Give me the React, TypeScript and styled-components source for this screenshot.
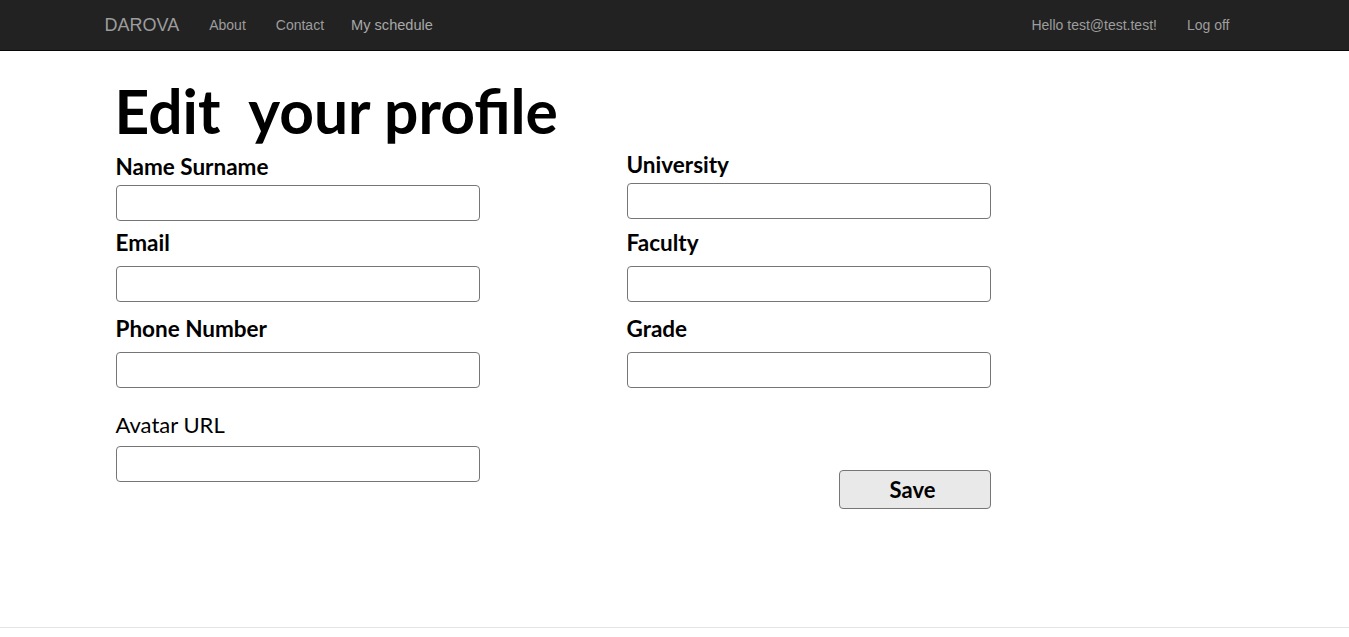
import { FC } from 'react'
import styled, { createGlobalStyle } from 'styled-components'

const GlobalStyle = createGlobalStyle`
    * {
        box-sizing: border-box;
    }
    body {
        margin: 0;
        background: #fff;
        font-family: "Liberation Sans", Arial, sans-serif;
    }
`

const NavBar = styled.nav`
    height: 51px;
    background-color: #222;
    border-bottom: 1px solid #080808;
`

const NavContainer = styled.div`
    width: 1170px;
    margin: 0 auto;
    padding: 0 15px;
    height: 50px;
    display: flex;
    align-items: center;
    justify-content: space-between;
`

const NavGroup = styled.div`
    display: flex;
    align-items: center;
`

const Brand = styled.a`
    font-size: 18px;
    color: #9d9d9d;
    padding: 0 15px 0 0;
    line-height: 50px;
    text-decoration: none;
`

const NavLink = styled.a<{ $bright?: boolean }>`
    font-size: ${p => (p.$bright ? '14.6px' : '14px')};
    color: ${p => (p.$bright ? '#a8a8a8' : '#9d9d9d')};
    padding: 0 15px 0 ${p => (p.$bright ? '12px' : '15px')};
    line-height: 50px;
    text-decoration: none;
`

const Main = styled.main`
    min-height: 576px;
    width: 1170px;
    margin: 0 auto;
    padding: 27px 0 0 26px;
`

const Title = styled.h1`
    margin: 0 0 10px -1px;
    font-family: Lato, "Noto Sans", sans-serif;
    font-weight: 700;
    font-size: 60.5px;
    line-height: 66px;
    color: #000;
`

const Columns = styled.div`
    display: flex;
    gap: 147px;
`

const Column = styled.div`
    width: 364px;
    display: flex;
    flex-direction: column;
`

const Field = styled.div<{ $top: number }>`
    display: flex;
    flex-direction: column;
    margin-top: ${p => p.$top}px;
`

const Label = styled.label<{ $plain?: boolean; $gap: number }>`
    font-family: Lato, "Noto Sans", sans-serif;
    font-weight: ${p => (p.$plain ? 400 : 700)};
    font-size: ${p => (p.$plain ? '22px' : '22.5px')};
    line-height: 26px;
    color: #000;
    margin-bottom: ${p => p.$gap}px;
`

const Input = styled.input`
    width: 364px;
    height: 36px;
    border: 1px solid #767676;
    border-radius: 4px;
    background: #fff;
    padding: 0 8px;
    font-size: 16px;
`

const SaveButton = styled.button`
    align-self: flex-end;
    width: 152px;
    height: 39px;
    margin-top: 82px;
    padding: 0 4px 0 0;
    background-color: #e9e9e9;
    border: 1px solid #767676;
    border-radius: 4px;
    font-family: Lato, "Noto Sans", sans-serif;
    font-weight: 700;
    font-size: 22px;
    color: #000;
    cursor: pointer;
`

const Footer = styled.footer`
    border-top: 1px solid #e5e5e5;
    height: 10px;
`

interface FieldType {
    label: string
    top: number
    gap: number
    plain?: boolean
}

const left: FieldType[] = [
    { label: 'Name Surname', top: 0, gap: 5 },
    { label: 'Email', top: 9, gap: 10 },
    { label: 'Phone Number', top: 14, gap: 10 },
    { label: 'Avatar URL', top: 24, gap: 8, plain: true },
]

const right: FieldType[] = [
    { label: 'University', top: -2, gap: 5 },
    { label: 'Faculty', top: 11, gap: 10 },
    { label: 'Grade', top: 14, gap: 10 },
]

const FormField: FC<{ data: FieldType }> = ({ data }) => (
    <Field $top={data.top}>
        <Label $plain={data.plain} $gap={data.gap}>
            {data.label}
        </Label>
        <Input type="text" />
    </Field>
)

const App: FC = () => {
    return (
        <>
            <GlobalStyle />
            <NavBar>
                <NavContainer>
                    <NavGroup>
                        <Brand href="#">DAROVA</Brand>
                        <NavLink href="#">About</NavLink>
                        <NavLink href="#">Contact</NavLink>
                        <NavLink href="#" $bright>My schedule</NavLink>
                    </NavGroup>
                    <NavGroup>
                        <NavLink href="#">Hello test@test.test!</NavLink>
                        <NavLink href="#">Log off</NavLink>
                    </NavGroup>
                </NavContainer>
            </NavBar>
            <Main>
                <Title>Edit&nbsp; your profile</Title>
                <Columns>
                    <Column>
                        {left.map(f => (
                            <FormField key={f.label} data={f} />
                        ))}
                    </Column>
                    <Column>
                        {right.map(f => (
                            <FormField key={f.label} data={f} />
                        ))}
                        <SaveButton>Save</SaveButton>
                    </Column>
                </Columns>
            </Main>
            <Footer />
        </>
    )
}

export default App
